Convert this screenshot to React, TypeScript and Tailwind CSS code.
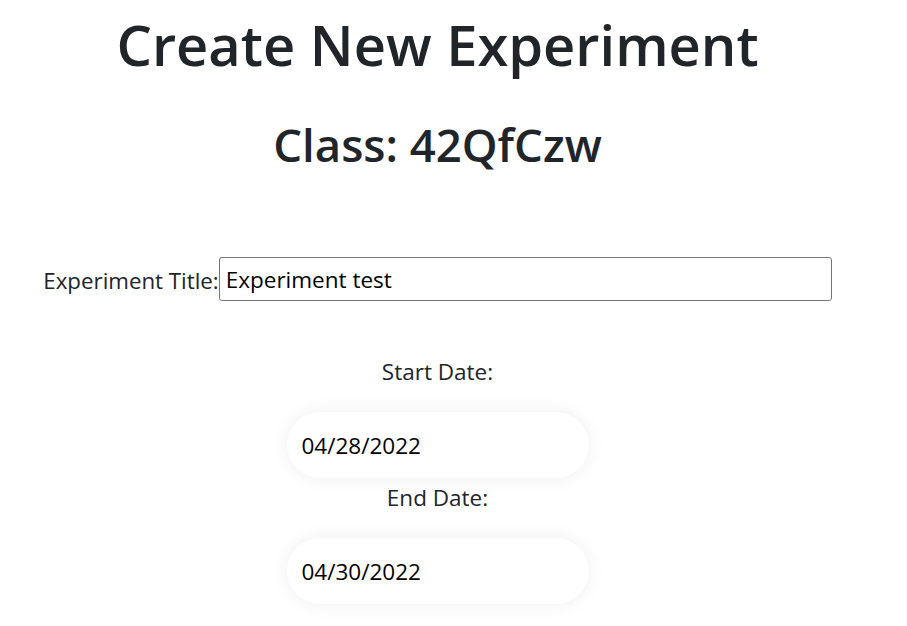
import React from "react"

const font = "font-['Segoe_UI','Open_Sans',sans-serif]"

function DateField({ label, value, top }: { label: string; value: string; top: string }) {
  return (
    <>
      <label className={`text-[22.5px] leading-[30px] ${top}`}>{label}</label>
      <input
        readOnly
        defaultValue={value}
        className="mt-[25px] h-[66px] w-[302px] rounded-full bg-white pl-[15px] text-[22.5px] text-black shadow-[0_0_18px_rgba(0,0,0,0.07)] outline-none"
      />
    </>
  )
}

export default function App() {
  return (
    <div className={`min-h-[626px] bg-white ${font}`}>
      <div className="flex w-[875px] flex-col items-center text-center text-[#212529]">
        <h1 className="mt-[6px] text-[56px] font-semibold leading-[76px]">Create New Experiment</h1>
        <h2 className="mt-[34px] text-[45.5px] font-semibold leading-[56px]">Class: 42QfCzw</h2>

        <div className="mt-[85px] flex h-[44px] items-center">
          <label className="pt-[3px] text-[22.3px] leading-[30px]">Experiment Title:</label>
          <input
            readOnly
            defaultValue="Experiment test"
            className="h-[44px] w-[613px] rounded-[3px] border border-[#767676] px-[6px] text-[22.5px] text-black outline-none"
          />
        </div>

        <DateField label="Start Date:" value="04/28/2022" top="mt-[56px]" />
        <DateField label="End Date:" value="04/30/2022" top="mt-[5px]" />
      </div>
    </div>
  )
}
